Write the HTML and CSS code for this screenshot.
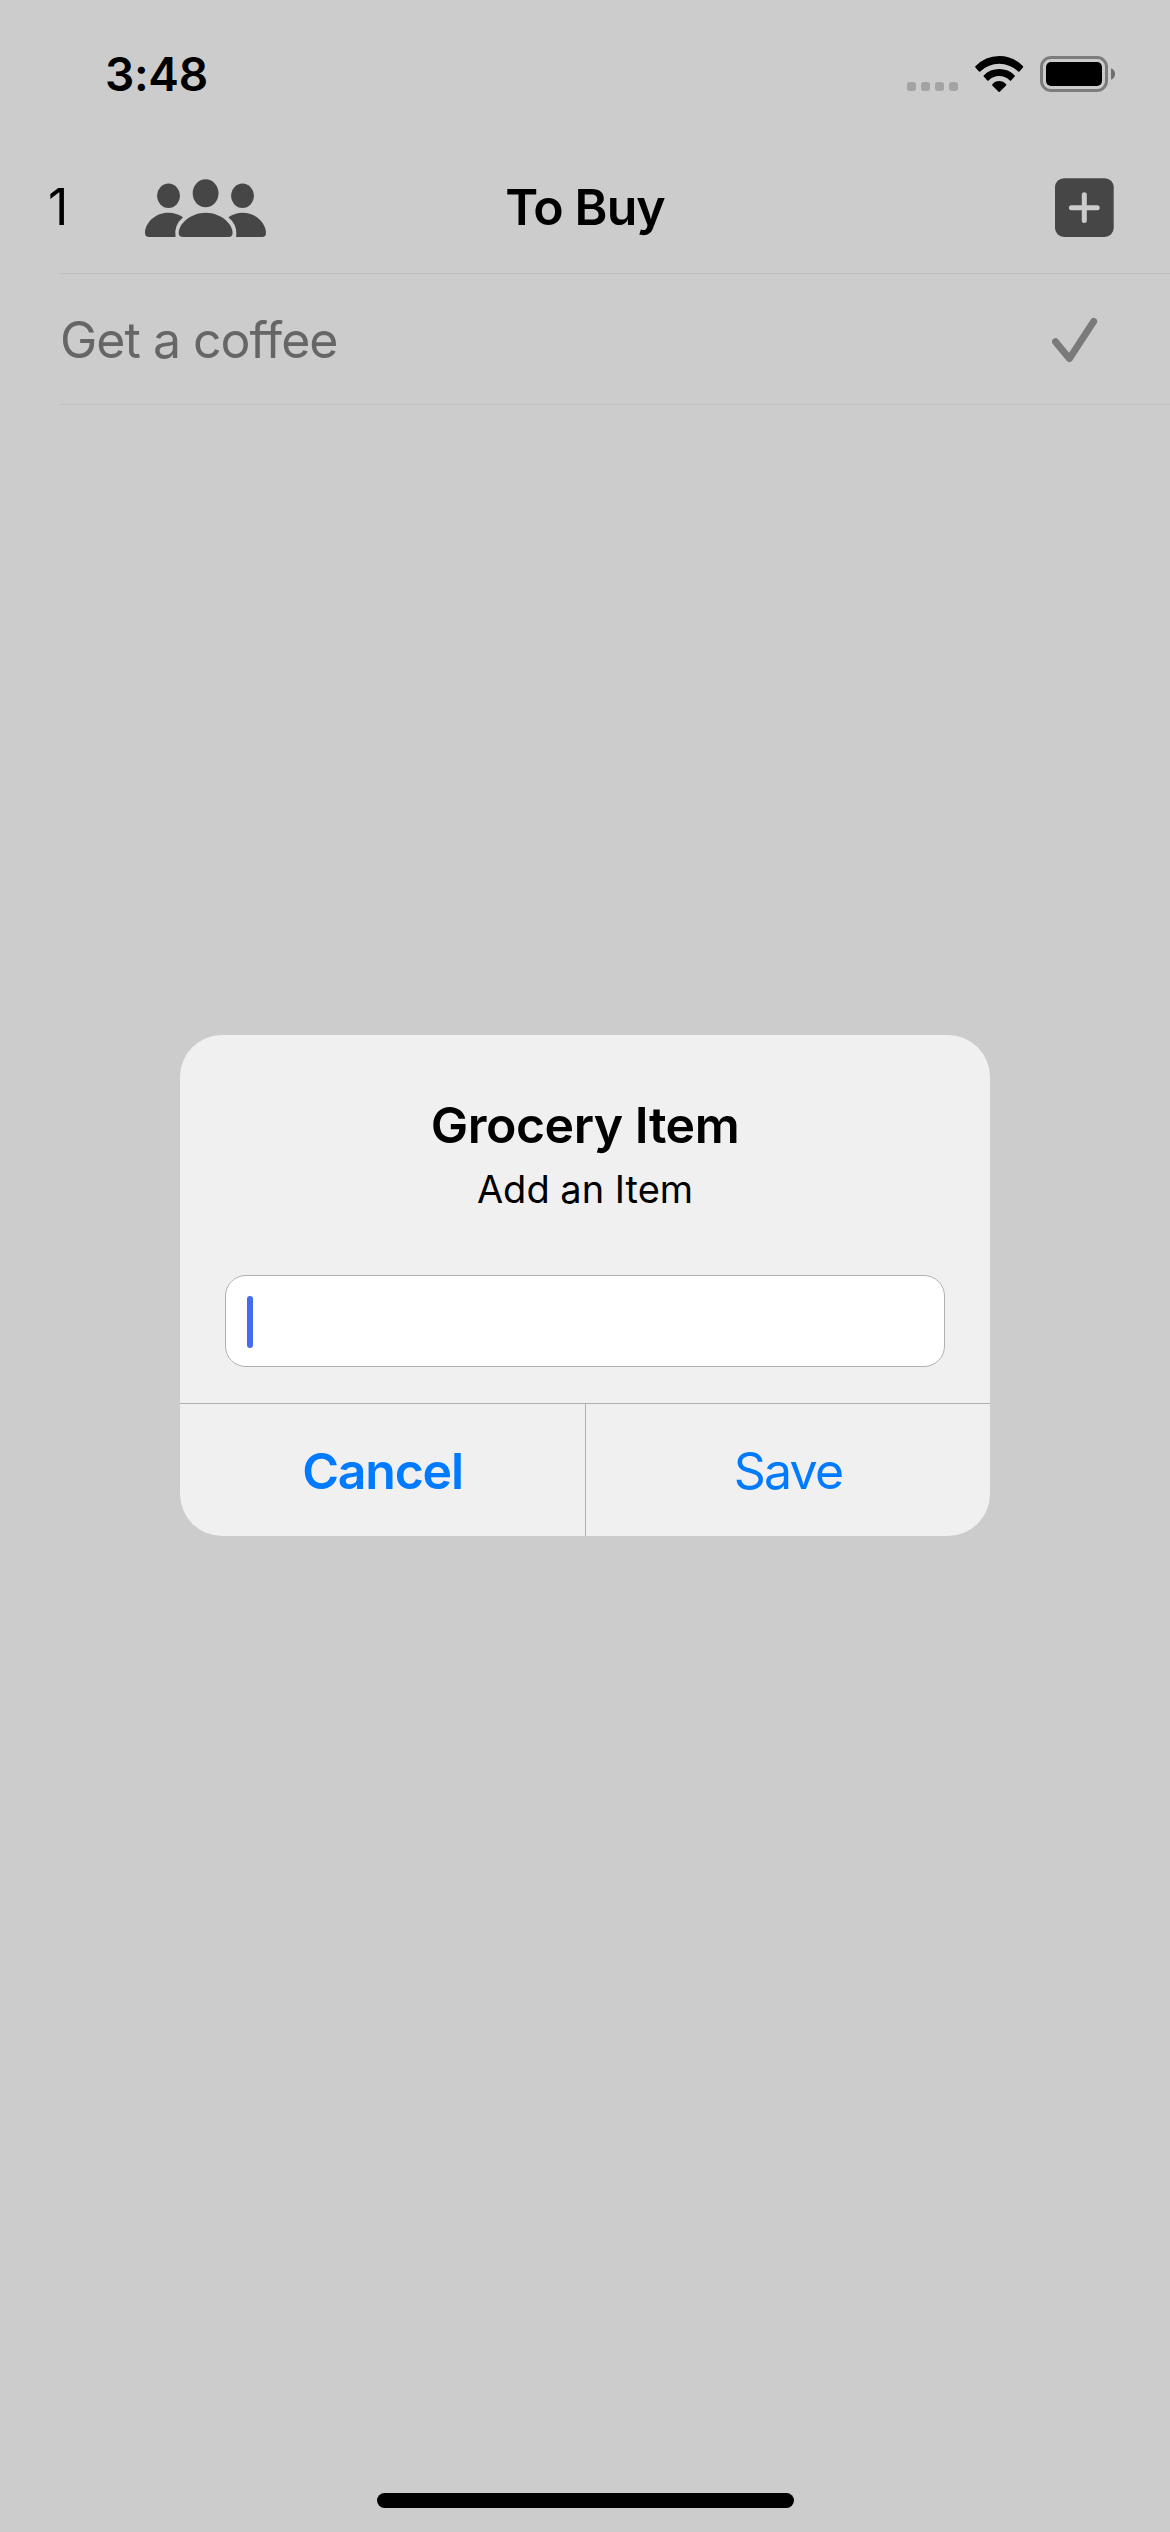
FILE: index.html
```html
<!DOCTYPE html>
<html lang="en">
<head>
<meta charset="utf-8">
<title>To Buy</title>
<link rel="stylesheet" href="styles.css">
</head>
<body>
<div class="screen">
  <header class="status">
    <span class="time">3:48</span>
    <div class="indicators">
      <div class="signal"><i></i><i></i><i></i><i></i></div>
      <svg class="wifi" width="49" height="37" viewBox="0 0 49 37">
        <path d="M.4 10.2Q10.5 0 24.2 0T48 10.2q.5.6 0 1.2l-3.6 4q-.6.6-1.2 0Q34.800 7.700 24.200 7.700T5.200 15.400q-.6.6-1.200 0l-3.600-4q-.5-.6 0-1.200z"/>
        <path d="M8.700 19.400Q15 13 24.200 13t15.500 6.400q.5.6 0 1.200l-3.600 4q-.6.6-1.200 0Q30.600 20 24.200 20t-10.700 4.600q-.6.6-1.200 0l-3.600-4q-.5-.6 0-1.200z"/>
        <path d="M17.300 28.200Q20.200 25 24.200 25t6.900 3.200q.5.6 0 1.200l-6.300 6.300q-.6.6-1.200 0l-6.300-6.300q-.5-.6 0-1.200z"/>
      </svg>
      <svg class="battery" width="75" height="36" viewBox="0 0 75 36">
        <rect x="1.500" y="1.500" width="65" height="33" rx="9.500" fill="none" stroke="#7c7c7c" stroke-width="3"/>
        <rect x="6" y="6" width="56" height="24" rx="5"/>
        <path d="M71 12.300q4 1.700 4 5.700t-4 5.700z" fill="#6e6e6e"/>
      </svg>
    </div>
  </header>

  <nav class="nav">
    <div class="nav-left">
      <span class="count">1</span>
      <svg class="people" width="122" height="58" viewBox="0 0 122 58" fill="#464646">
        <ellipse cx="23.500" cy="16.800" rx="11.400" ry="12.200"/>
        <ellipse cx="60.600" cy="14.300" rx="12.900" ry="14"/>
        <ellipse cx="97.500" cy="16.800" rx="11.400" ry="12.200"/>
        <path d="M23.500 33.700Q31.500 33.700 38 38.300Q28.500 46.500 30.500 58H4Q0 58 0 54C0 44.500 9.500 33.700 23.500 33.700z"/>
        <path d="M83.400 38.300Q90 33.700 97.500 33.700C111.500 33.700 121 44.500 121 54Q121 58 117 58H91Q93 46.500 83.400 38.300z"/>
        <path d="M60.700 33.700C76 33.700 87.600 45 87.600 54Q87.600 58 83.500 58H38Q33.700 58 33.700 54C33.700 45 45.500 33.700 60.700 33.700z"/>
      </svg>
    </div>
    <h1 class="title">To Buy</h1>
    <svg class="add" width="60" height="60" viewBox="0 0 60 60">
      <rect x="0" y="0.200" width="58.700" height="58.700" rx="9" fill="#464646"/>
      <path d="M16.400 29.700H42.200M29.300 16.800V42.600" stroke="#ccc" stroke-width="5" stroke-linecap="round"/>
    </svg>
  </nav>

  <ul class="list">
    <li class="item">
      <span class="item-name">Get a coffee</span>
      <svg class="check" width="46" height="46" viewBox="0 0 46 46">
        <path d="M3.500 24.700L17.400 41.600L41.700 4.400" fill="none" stroke="#7a7a7a" stroke-width="7" stroke-linecap="round" stroke-linejoin="round"/>
      </svg>
    </li>
  </ul>

  <div class="home-bar"></div>

  <section class="alert">
    <div class="alert-body">
      <h2 class="alert-title">Grocery Item</h2>
      <p class="alert-text">Add an Item</p>
      <div class="field"><span class="caret"></span></div>
    </div>
    <div class="actions">
      <span class="action cancel">Cancel</span>
      <span class="action save">Save</span>
    </div>
  </section>
</div>
</body>
</html>
```
FILE: styles.css
```css
* { box-sizing: border-box; }
body { margin: 0; background: #ccc; font-family: Inter, "Liberation Sans", sans-serif; color: #000; }
h1, h2, p, ul { margin: 0; padding: 0; }
svg { display: block; flex: none; }
.screen { position: relative; display: flex; flex-direction: column; width: 1170px; height: 2532px; overflow: hidden; background: #ccc; }

.status { display: flex; justify-content: space-between; align-items: center; height: 141px; padding: 7px 55px 0 105px; }
.time { font-size: 46px; font-weight: 600; line-height: 60px; letter-spacing: -0.3px; }
.indicators { display: flex; align-items: center; }
.signal { display: flex; gap: 5px; margin: 25px 17px 0 0; }
.signal i { width: 9px; height: 9px; border-radius: 3px; background: #a3a3a3; }
.wifi { margin-right: 16px; }

.nav { display: grid; grid-template-columns: 1fr auto 1fr; align-items: center; height: 132px; padding: 0 55px 0 48px; }
.nav-left { display: flex; align-items: center; }
.count { width: 97px; font-size: 50px; line-height: 60px; }
.people { margin-top: 2px; }
.title { margin-left: 7px; font-size: 50px; font-weight: 600; line-height: 60px; letter-spacing: -0.9px; }
.add { justify-self: end; margin-top: 2px; }

.list { list-style: none; margin-left: 60px; border-top: 1px solid #bfbfc1; }
.item { display: flex; justify-content: space-between; align-items: center; height: 131px; padding: 2px 72px 0 0; border-bottom: 1px solid #bfbfc4; }
.item-name { font-size: 50px; line-height: 60px; color: #666; letter-spacing: -1px; }

.home-bar { width: 417px; height: 15px; margin: auto auto 24px; border-radius: 8px; background: #000; }

.alert { position: absolute; left: 180px; top: 1035px; width: 810px; height: 501px; display: flex; flex-direction: column; border-radius: 42px; overflow: hidden; background: #f0f0f0; text-align: center; }
.alert-body { height: 368px; padding: 60px 45px 0; }
.alert-title { font-size: 50px; font-weight: 600; line-height: 60px; letter-spacing: -0.5px; }
.alert-text { margin-top: 10px; font-size: 38px; line-height: 48px; }
.field { display: flex; align-items: center; height: 92px; margin-top: 62px; padding: 2px 0 0 21px; border: 1px solid #b0b0b0; border-radius: 21px; background: #fff; }
.caret { width: 6px; height: 52px; border-radius: 3px; background: #436cf2; }
.actions { display: grid; grid-template-columns: 406px 404px; flex: 1; border-top: 1px solid #b0b0b0; }
.action { padding-top: 37px; font-size: 50px; line-height: 60px; color: #007aff; letter-spacing: -1.2px; }
.cancel { border-right: 1px solid #b0b0b0; font-weight: 600; }
.save { letter-spacing: -1.8px; }
```
